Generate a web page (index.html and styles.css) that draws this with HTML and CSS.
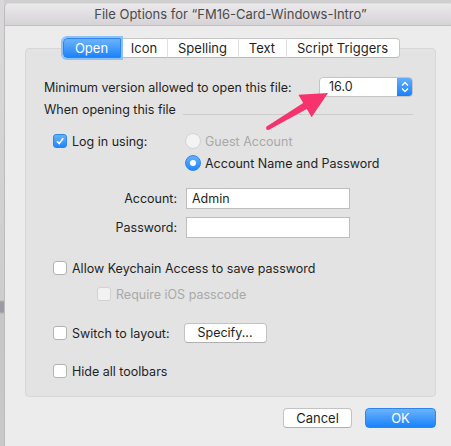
FILE: index.html
```html
<!DOCTYPE html>
<html lang="en">
<head>
    <meta charset="UTF-8">
    <title>File Options</title>
    <link rel="stylesheet" href="styles.css">
</head>
<body>
    <div class="desk"></div>

    <div class="window">
        <div class="titlebar">File Options for “FM16-Card-Windows-Intro”</div>

        <div class="content">
            <div class="tabs">
                <div class="seg selected w-open">Open</div>
                <div class="seg w-icon">Icon</div>
                <div class="seg w-spell">Spelling</div>
                <div class="seg w-text">Text</div>
                <div class="seg w-script">Script Triggers</div>
            </div>

            <div class="panel">
                <div class="row row-version">
                    <span>Minimum version allowed to open this file:</span>
                    <div class="popup">
                        <span class="popup-value">16.0</span>
                        <span class="stepper">
                            <svg width="8" height="12" viewBox="0 0 8 12"><path d="M1 4.5 L4 1.5 L7 4.5 M1 7.5 L4 10.5 L7 7.5" fill="none" stroke="#fff" stroke-width="1.3"/></svg>
                        </span>
                    </div>
                </div>

                <div class="row row-when">
                    <span>When opening this file</span>
                    <div class="sep"></div>
                </div>

                <div class="login">
                    <div class="opt login-check">
                        <span class="box checked">
                            <svg width="10" height="10" viewBox="0 0 10 10"><path d="M2 5.2 L4.2 7.6 L8.2 2.2" fill="none" stroke="#fff" stroke-width="1.6"/></svg>
                        </span>
                        <span>Log in using:</span>
                    </div>
                    <div class="radios">
                        <div class="opt radio-row disabled"><span class="radio"></span><span>Guest Account</span></div>
                        <div class="opt radio-row"><span class="radio on"></span><span>Account Name and Password</span></div>
                    </div>
                </div>

                <div class="field field-account">
                    <label>Account:</label>
                    <div class="input">Admin</div>
                </div>
                <div class="field field-password">
                    <label>Password:</label>
                    <div class="input"></div>
                </div>

                <div class="opt line-keychain"><span class="box"></span><span>Allow Keychain Access to save password</span></div>
                <div class="opt line-ios disabled"><span class="box"></span><span>Require iOS passcode</span></div>
                <div class="opt line-switch">
                    <span class="box"></span><span>Switch to layout:</span>
                    <div class="button specify">Specify...</div>
                </div>
                <div class="opt line-hide"><span class="box"></span><span>Hide all toolbars</span></div>
            </div>

            <div class="footer">
                <div class="button cancel">Cancel</div>
                <div class="button ok">OK</div>
            </div>
        </div>
    </div>

    <svg class="arrow" width="451" height="446" viewBox="0 0 451 446">
        <polygon points="267,126.3 303.2,103 298.4,94.8 328,93 311.6,117.2 306.8,109 269,129.7" fill="#f7336d"/>
        <circle cx="268" cy="128" r="2" fill="#f7336d"/>
    </svg>
</body>
</html>
```

FILE: styles.css
```css
body { margin: 0; width: 451px; height: 446px; overflow: hidden; display: flex; background: #cfcfcf; font-family: Inter, "Liberation Sans", Arial, sans-serif; font-size: 12.5px; color: #1f1f1f; position: relative; }

.desk { width: 4px; flex-shrink: 0; background: linear-gradient(to bottom, #d9d9d9 0, #cdcdcd 300px, #9c9aa2 302px, #9c9aa2 312px, #c6c6c6 314px, #c9c9c9 100%); }

.window { width: 451px; flex-shrink: 0; margin-top: 3px; background: #ececec; border-left: 1px solid #bcbcbc; border-top: 1px solid #dcdcdc; border-top-left-radius: 5px; }

.titlebar { height: 21px; line-height: 21px; font-size: 13px; text-align: center; color: #4b4b4b; background: linear-gradient(to bottom, #ebe9eb, #d5d3d5); border-bottom: 1px solid #bfbfbf; border-top-left-radius: 5px; }

.content { padding: 12px 20px 0 20px; }

/* segmented tabs */
.tabs { display: flex; justify-content: center; position: relative; z-index: 1; margin-left: 1px; }
.seg { height: 20px; line-height: 19px; font-size: 13px; text-align: center; background: #fff; border-top: 1px solid #c6c6c6; border-bottom: 1px solid #b9b9b9; border-left: 1px solid #e0e0e0; box-sizing: border-box; }
.seg:last-child { border-right: 1px solid #c6c6c6; border-radius: 0 4px 4px 0; }
.seg.selected { background: linear-gradient(to bottom, #6db3fb, #1c83fb); color: #fff; border: 1px solid #2d86f0; border-radius: 4px 0 0 4px; box-shadow: 0 0 0 2px #8fc0f6; position: relative; z-index: 1; }
.w-open { width: 58px; }
.w-icon { width: 46px; }
.w-spell { width: 71px; }
.w-text { width: 48px; }
.w-script { width: 114px; }

.panel { margin-top: -10px; height: 349px; box-sizing: border-box; background: #e3e3e3; border: 1px solid #d7d7d7; border-radius: 4px; padding: 0 22px 0 18px; }

.row { display: flex; align-items: center; }
.row-version { height: 20px; margin-top: 28px; justify-content: space-between; }
.popup { width: 94px; height: 20px; box-sizing: border-box; display: flex; background: #fff; border: 1px solid #c4c4c4; border-radius: 4px; overflow: hidden; }
.popup-value { flex: 1; padding-left: 9px; line-height: 18px; }
.stepper { width: 15px; display: flex; align-items: center; justify-content: center; background: linear-gradient(to bottom, #62aefb, #1a80fb); }

.row-when { height: 16px; margin-top: 4px; }
.sep { flex: 1; height: 1px; background: #cdcdcd; margin: 10px 0 0 7px; }

.opt { display: flex; align-items: center; height: 20px; }
.opt.disabled { color: #a9a9a9; }

.box { width: 14px; height: 14px; box-sizing: border-box; background: #fff; border: 1px solid #b3b3b3; border-radius: 3px; margin-right: 5px; display: flex; align-items: center; justify-content: center; flex-shrink: 0; }
.box.checked { background: linear-gradient(to bottom, #67b0fb, #2088fb); border-color: #2d86f0; }
.disabled .box { background: #f2f2f2; border-color: #d2d2d2; }

.login { display: flex; margin-top: 13px; margin-left: 9px; }
.login-check { width: 132px; height: 22px; }
.radio-row { height: 22px; }
.radio { width: 16px; height: 16px; box-sizing: border-box; border-radius: 50%; background: #fff; border: 1px solid #b3b3b3; margin-right: 4px; display: flex; align-items: center; justify-content: center; }
.disabled .radio { background: #f3f3f3; border-color: #d3d3d3; }
.radio.on { background: linear-gradient(to bottom, #67b0fb, #2088fb); border-color: #2d86f0; }
.radio.on::after { content: ""; width: 6px; height: 6px; border-radius: 50%; background: #fff; }

.field { display: flex; align-items: center; margin-left: 9px; }
.field label { width: 124px; text-align: right; margin-right: 9px; }
.field-account { margin-top: 14px; }
.field-password { margin-top: 8px; }
.input { width: 164px; height: 21px; box-sizing: border-box; background: #fff; border: 1px solid #bdbdbd; padding-left: 5px; line-height: 19px; }

.line-keychain { margin-top: 20px; margin-left: 9px; }
.line-ios { margin-top: 6px; margin-left: 53px; }
.line-switch { margin-top: 19px; margin-left: 9px; }
.line-hide { margin-top: 18px; margin-left: 9px; }

.button { height: 20px; line-height: 18px; box-sizing: border-box; text-align: center; background: #fff; border: 1px solid #c3c3c3; border-bottom-color: #b0b0b0; border-radius: 4px; }
.specify { width: 83px; margin-left: 14px; }

.footer { display: flex; justify-content: flex-end; gap: 13px; margin-top: 11px; }
.cancel { width: 69px; font-size: 13px; }
.ok { width: 71px; font-size: 13px; color: #fff; background: linear-gradient(to bottom, #6db3fb, #1a82fb); border-color: #2d86f0; }

.arrow { position: absolute; left: 0; top: 0; pointer-events: none; }
```
